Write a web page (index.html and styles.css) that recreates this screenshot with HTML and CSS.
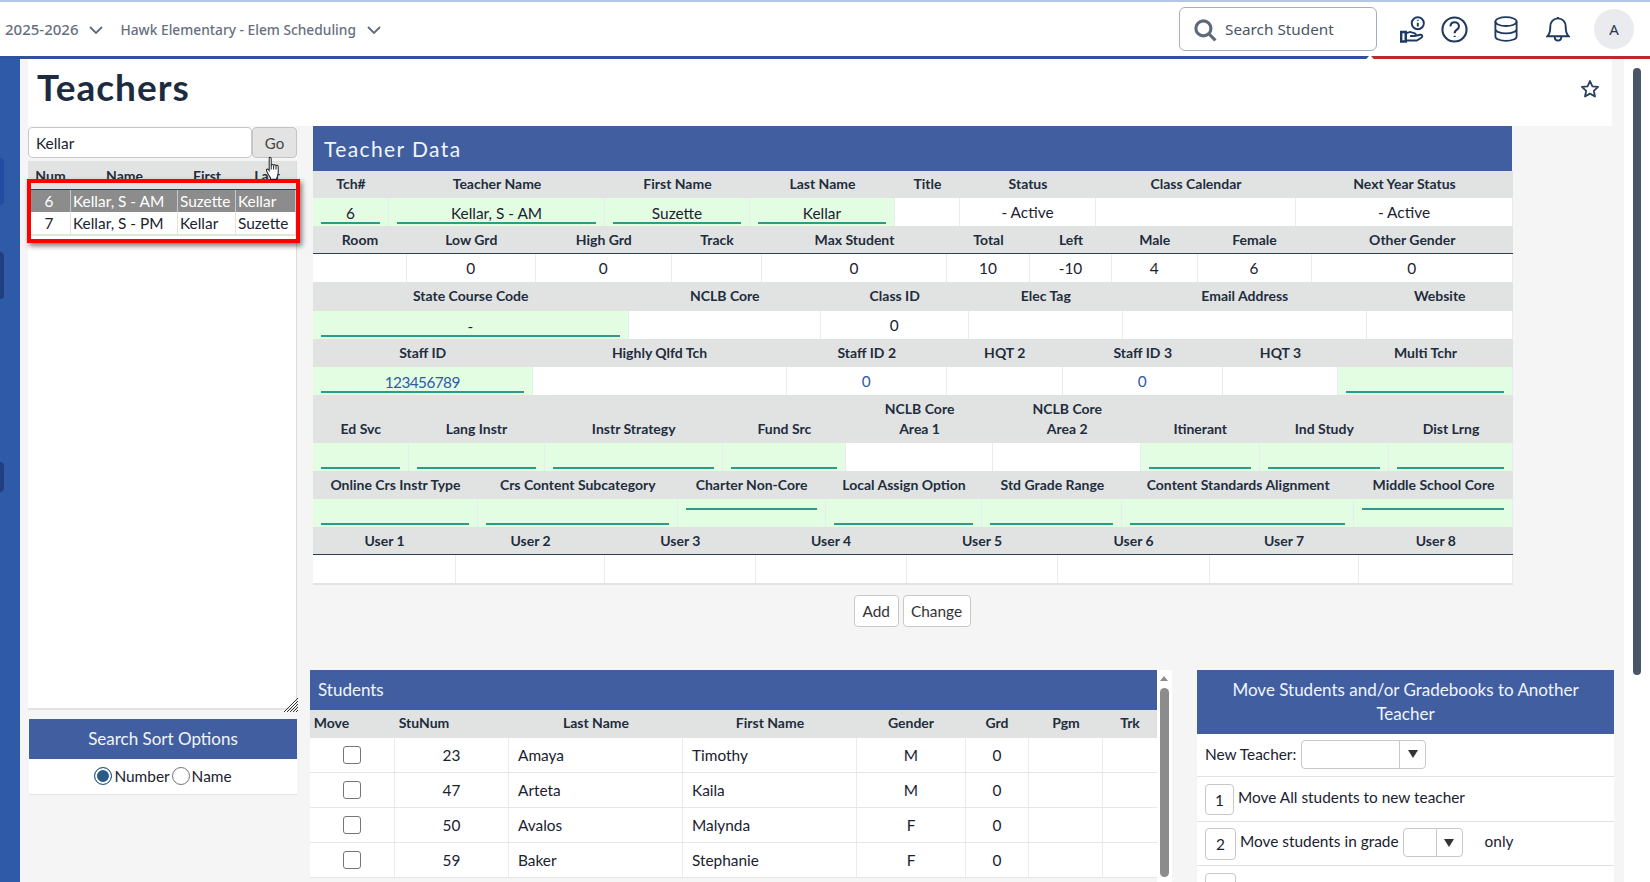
FILE: index.html
```html
<!DOCTYPE html>
<html lang="en">
<head>
<meta charset="utf-8">
<title>Teachers</title>
<link rel="stylesheet" href="styles.css">
</head>
<body>
<header class="top">
  <div class="ctx">
    <span class="year">2025-2026</span>
    <svg class="chev" viewBox="0 0 14 8"><path d="M1 1l6 6 6-6"/></svg>
    <span class="school">Hawk Elementary - Elem Scheduling</span>
    <svg class="chev" viewBox="0 0 14 8"><path d="M1 1l6 6 6-6"/></svg>
  </div>
  <div class="tools">
    <div class="search">
      <svg class="search-i" viewBox="0 0 22 22"><circle cx="9" cy="9" r="7.200"/><path d="M14.500 14.500l6 6"/></svg>
      <span>Search Student</span>
    </div>
    <svg class="ico hand" viewBox="0 0 26 28"><circle cx="18.500" cy="7.500" r="6.300"/><path d="M18.500 7v4M18.500 3.800v1.200"/><path class="sleeve" d="M1.200 16.500h4.800v10H1.200z"/><path d="M6 18l4.500-1.500 5 1.500c1.500.6 1 2.800-.5 2.800H10.500M15 20.800l6-1.300c2-.2 3 1.500 1.500 2.800L17.500 25.500H6"/></svg>
    <svg class="ico help" viewBox="0 0 28 28"><circle cx="14" cy="14" r="12.500"/><path d="M9.800 10.800c.3-6 8.800-5.500 8.800 0 0 3.400-4.500 3.400-4.500 7M14.100 20.600v1.200"/></svg>
    <svg class="ico db" viewBox="0 0 26 28"><ellipse cx="13" cy="6" rx="11.500" ry="4.800"/><path d="M1.500 6v16c0 2.600 5 4.800 11.500 4.800s11.500-2.200 11.500-4.800V6M1.500 14c0 2.600 5 4.800 11.500 4.800s11.500-2.200 11.500-4.800"/></svg>
    <svg class="ico bell" viewBox="0 0 24 27"><path d="M1 21c3-2.500 3-6 3-10 0-5 3.500-8.500 8-8.500s8 3.500 8 8.500c0 4 0 7.500 3 10zM12 1v1.500M8.500 21c0 6 7 6 7 0"/></svg>
    <div class="avatar">A</div>
  </div>
</header>
<div class="stripe"><i class="s-blue"></i><i class="s-red"></i></div>

<main class="main">
  <aside class="rail">
    <i class="tab tab1"></i><i class="tab tab2"></i><i class="tab tab3"></i>
  </aside>
  <div class="page">
    <div class="titlebar">
      <h1>Teachers</h1>
      <svg class="star" viewBox="0 0 20 20"><path d="M10 2l2.400 5.300 5.700.6-4.300 3.900 1.200 5.700L10 14.600l-5 2.900 1.200-5.700L1.900 7.900l5.700-.6z"/></svg>
    </div>
    <div class="work">
      <section class="left">
        <div class="finder">
          <div class="finder-input">Kellar</div>
          <div class="go">Go</div>
        </div>
        <div class="list">
          <div class="list-head"><span>Num</span><span>Name</span><span>First</span><span>Last</span></div>
          <div class="list-row sel"><span class="c">6</span><span>Kellar, S - AM</span><span>Suzette</span><span>Kellar</span></div>
          <div class="list-row"><span class="c">7</span><span>Kellar, S - PM</span><span>Kellar</span><span>Suzette</span></div>
          <div class="list-end"></div>
          <svg class="grip" viewBox="0 0 14 14"><path d="M0 14L14 0M3 14L14 3M6 14l8-8M9 14l5-5M12 14l2-2"/></svg>
        </div>
        <div class="redbox"></div>
        <svg class="cursor" viewBox="0 0 15 23" preserveAspectRatio="none"><path d="M4.200 1.500c1-.8 2-.2 2 1v6.500c.2-1.500 2.200-1.500 2.400 0 .2-1.300 2.200-1.300 2.400.2.300-1 2-.9 2.200.5v5.300c0 2.500-.8 3.600-1.500 5.500v1H5.500v-1.500c-1.500-2-3-4-4-6.500-.4-1.200.9-2 2-1l.7.900z"/><path d="M6.200 8.500v4M8.600 9v3.500M11 9.200v3.300"/></svg>
        <div class="sort">
          <div class="sort-head">Search Sort Options</div>
          <div class="sort-body">
            <span class="radio on"></span><span>Number</span><span class="radio"></span><span>Name</span>
          </div>
        </div>
      </section>

      <section class="right">
        <div class="teacher">
          <h2>Teacher Data</h2>

          <div class="row h27 r1">
            <div class="h">Tch#</div><div class="h">Teacher Name</div><div class="h">First Name</div><div class="h">Last Name</div><div class="h">Title</div><div class="h">Status</div><div class="h">Class Calendar</div><div class="h">Next Year Status</div>
          </div>
          <div class="row vals r1">
            <div class="g"><div class="u">6</div></div><div class="g"><div class="u">Kellar, S - AM</div></div><div class="g"><div class="u">Suzette</div></div><div class="g"><div class="u">Kellar</div></div><div class="v"></div><div class="v">- Active</div><div class="v"></div><div class="v">- Active</div>
          </div>

          <div class="row dark r2">
            <div class="h">Room</div><div class="h">Low Grd</div><div class="h">High Grd</div><div class="h">Track</div><div class="h">Max Student</div><div class="h">Total</div><div class="h">Left</div><div class="h">Male</div><div class="h">Female</div><div class="h">Other Gender</div>
          </div>
          <div class="row vals r2">
            <div class="v"></div><div class="v">0</div><div class="v">0</div><div class="v"></div><div class="v">0</div><div class="v">10</div><div class="v">-10</div><div class="v">4</div><div class="v">6</div><div class="v">0</div>
          </div>

          <div class="row h29 r3">
            <div class="h">State Course Code</div><div class="h">NCLB Core</div><div class="h">Class ID</div><div class="h">Elec Tag</div><div class="h">Email Address</div><div class="h">Website</div>
          </div>
          <div class="row vals r3">
            <div class="g"><div class="u">-</div></div><div class="v"></div><div class="v">0</div><div class="v"></div><div class="v"></div><div class="v"></div>
          </div>

          <div class="row r4">
            <div class="h">Staff ID</div><div class="h">Highly Qlfd Tch</div><div class="h">Staff ID 2</div><div class="h">HQT 2</div><div class="h">Staff ID 3</div><div class="h">HQT 3</div><div class="h">Multi Tchr</div>
          </div>
          <div class="row vals r4">
            <div class="g"><div class="u link">123456789</div></div><div class="v"></div><div class="v link">0</div><div class="v"></div><div class="v link">0</div><div class="v"></div><div class="g"><div class="u"></div></div>
          </div>

          <div class="row h48 r5">
            <div class="h">Ed Svc</div><div class="h">Lang Instr</div><div class="h">Instr Strategy</div><div class="h">Fund Src</div><div class="h">NCLB Core<br>Area 1</div><div class="h">NCLB Core<br>Area 2</div><div class="h">Itinerant</div><div class="h">Ind Study</div><div class="h">Dist Lrng</div>
          </div>
          <div class="row vals r5">
            <div class="g"><div class="u"></div></div><div class="g"><div class="u"></div></div><div class="g"><div class="u"></div></div><div class="g"><div class="u"></div></div><div class="v"></div><div class="v"></div><div class="g"><div class="u"></div></div><div class="g"><div class="u"></div></div><div class="g"><div class="u"></div></div>
          </div>

          <div class="row r6">
            <div class="h">Online Crs Instr Type</div><div class="h">Crs Content Subcategory</div><div class="h">Charter Non-Core</div><div class="h">Local Assign Option</div><div class="h">Std Grade Range</div><div class="h">Content Standards Alignment</div><div class="h">Middle School Core</div>
          </div>
          <div class="row vals r6">
            <div class="g"><div class="u"></div></div><div class="g"><div class="u"></div></div><div class="g"><div class="u short"></div></div><div class="g"><div class="u"></div></div><div class="g"><div class="u"></div></div><div class="g"><div class="u"></div></div><div class="g"><div class="u short"></div></div>
          </div>

          <div class="row dark r7">
            <div class="h">User 1</div><div class="h">User 2</div><div class="h">User 3</div><div class="h">User 4</div><div class="h">User 5</div><div class="h">User 6</div><div class="h">User 7</div><div class="h">User 8</div>
          </div>
          <div class="row vals end r7">
            <div class="v"></div><div class="v"></div><div class="v"></div><div class="v"></div><div class="v"></div><div class="v"></div><div class="v"></div><div class="v"></div>
          </div>
        </div>

        <div class="actions"><div class="btn">Add</div><div class="btn">Change</div></div>

        <div class="lower">
          <div class="students">
            <div class="stu-main">
              <div class="panel-head">Students</div>
              <div class="stu-head"><span>Move</span><span>StuNum</span><span>Last Name</span><span>First Name</span><span>Gender</span><span>Grd</span><span>Pgm</span><span>Trk</span></div>
              <div class="stu-row"><div><i class="check"></i></div><div class="c">23</div><div>Amaya</div><div>Timothy</div><div class="c">M</div><div class="c">0</div><div></div><div></div></div>
              <div class="stu-row"><div><i class="check"></i></div><div class="c">47</div><div>Arteta</div><div>Kaila</div><div class="c">M</div><div class="c">0</div><div></div><div></div></div>
              <div class="stu-row"><div><i class="check"></i></div><div class="c">50</div><div>Avalos</div><div>Malynda</div><div class="c">F</div><div class="c">0</div><div></div><div></div></div>
              <div class="stu-row"><div><i class="check"></i></div><div class="c">59</div><div>Baker</div><div>Stephanie</div><div class="c">F</div><div class="c">0</div><div></div><div></div></div>
            </div>
            <div class="stu-scroll"><i class="up"></i><i class="thumb"></i></div>
          </div>

          <div class="move">
            <div class="move-head">Move Students and/or Gradebooks to Another Teacher</div>
            <div class="move-new">New Teacher:<div class="combo wide"><i></i><b></b></div></div>
            <div class="move-row"><div class="num n29">1</div><span>Move All students to new teacher</span></div>
            <div class="move-row"><div class="num">2</div><span class="grade">Move students in grade</span><div class="combo small"><i></i><b></b></div><span class="only">only</span></div>
            <div class="move-row"><div class="num"></div></div>
          </div>
        </div>
      </section>
    </div>
  </div>
  <div class="pagescroll"><i></i></div>
</main>
</body>
</html>
```
FILE: styles.css
```css
* { box-sizing: border-box; }
html, body { margin: 0; height: 882px; overflow: hidden; }
body { font-family: Lato, "Noto Sans", sans-serif; font-size: 15.400px; color: #1a2230; background: #fff; }

.top { height: 56px; border-top: 2px solid #b4c6e4; display: flex; justify-content: space-between; align-items: center; background: #fff; }
.ctx { display: flex; align-items: center; padding-left: 5px; color: #667080; font-family: "Noto Sans", sans-serif; font-size: 13.750px; font-weight: 500; }
.year { font-size: 15px; }
.chev { width: 14px; height: 8px; margin: 2px 0 0 11px; fill: none; stroke: #5f6b7a; stroke-width: 1.800; }
.school { margin-left: 17px; }
.tools { display: flex; align-items: center; padding-right: 16px; }
.search { width: 198px; height: 44px; border: 1px solid #a3aec2; border-radius: 6px; display: flex; align-items: center; padding-left: 15px; margin-right: 23px; font-family: "Noto Sans", sans-serif; font-size: 15.300px; color: #4b5565; }
.search-i { width: 23px; height: 23px; margin: 2px 8px 0 -1px; fill: none; stroke: #5f6b7a; stroke-width: 3; }
.ico { fill: none; stroke: #1f3a5f; stroke-width: 2; display: block; }
.hand { width: 25px; height: 27px; margin-right: 16px; stroke-width: 2; }
.hand .sleeve { stroke-width: 2.600; }
.help { width: 27px; height: 27px; margin-right: 26px; stroke-width: 2.200; }
.db { width: 24px; height: 26px; margin-right: 28px; }
.bell { width: 24px; height: 26px; margin-right: 24px; }
.avatar { width: 40px; height: 40px; border-radius: 50%; background: #e9ebef; display: flex; align-items: center; justify-content: center; font-family: "Noto Sans", sans-serif; font-size: 15px; color: #2a3a52; }

.stripe { height: 3px; display: flex; justify-content: space-between; background: #fff; }
.s-blue { width: 1369px; background: #2f52a0; clip-path: polygon(0 0, 100% 0, 99.800% 100%, 0 100%); }
.s-red { width: 279px; background: #c0272d; clip-path: polygon(0 0, 100% 0, 100% 100%, 1% 100%); }

.main { display: flex; height: 823px; }
.rail { width: 20px; background: #2f5aa8; position: relative; flex: none; }
.tab { position: absolute; left: -4px; width: 8px; background: #1f3f80; border-radius: 4px; }
.tab1 { top: 99px; height: 47px; background: #214ea0; }
.tab2 { top: 193px; height: 47px; }
.tab3 { top: 403px; height: 30px; }
.page { width: 1604px; background: #f5f5f5; flex: none; }
.pagescroll { flex: 1; background: #fff; padding: 9px 0 0 9px; }
.pagescroll i { display: block; width: 8px; height: 607px; border-radius: 4px; background: #4a5568; }

.titlebar { margin-left: 8px; width: 1584px; height: 67px; background: #fff; display: flex; justify-content: space-between; align-items: flex-start; padding: 0 12px 0 9px; }
h1 { margin: 6px 0 0; font-size: 37px; line-height: 44px; font-weight: 700; letter-spacing: 1px; color: #1c2b40; }
.star { width: 20px; height: 20px; margin-top: 20px; fill: none; stroke: #2a3f5f; stroke-width: 1.800; stroke-linejoin: round; }

.work { display: flex; align-items: flex-start; padding-left: 8px; }
.left { width: 269px; position: relative; flex: none; padding-top: 1px; }
.finder { display: flex; height: 31px; background: #fff; }
.finder-input { width: 224px; border: 1px solid #c8c8c8; border-radius: 4px; padding: 0 7px; line-height: 31px; background: #fff; }
.go { width: 45px; border: 1px solid #c4c4c4; border-radius: 4px; background: #e3e3e3; text-align: center; line-height: 30px; font-size: 15px; color: #444; }
.list { margin-top: 3px; height: 549px; background: #fff; border-right: 1px solid #dcdcdc; position: relative; }
.list-head { height: 29px; background: #e1e3e3; display: grid; grid-template-columns: 45px 103px 62px 58px; border-bottom: 1px solid #2d3e55; font-weight: 700; font-size: 14px; color: #1f2d3d; text-align: center; line-height: 29px; }
.list-row { height: 22px; display: grid; grid-template-columns: 43px 107px 58px 60px; line-height: 23px; }
.list-row span { border-right: 1px solid #e3e3e3; padding-left: 2px; white-space: nowrap; overflow: hidden; }
.list-row .c { text-align: center; padding: 0; }
.list-row.sel { background: #8c8c8c; color: #fff; }
.list-row.sel span { border-color: #c8c8c8; }
.list-end { height: 2px; background: #e3e3e3; }
.grip { position: absolute; right: -2px; bottom: -2px; width: 14px; height: 14px; fill: none; stroke: #333; stroke-width: 1; z-index: 1; }
.list::after { content: ""; position: absolute; left: 0; right: 0; bottom: 0; height: 2px; background: #e2e4e4; }
.redbox { position: absolute; left: -1px; top: 53px; width: 273px; height: 64px; border: 4.500px solid #f00; box-shadow: 2px 3px 5px rgba(0, 0, 0, .5); }
.cursor { position: absolute; left: 237px; top: 30px; width: 15px; height: 25px; fill: #fff; stroke: #222; stroke-width: 1; }
.sort { margin: 9px 0 0 1px; width: 268px; }
.sort-head { height: 40px; background: #415fa0; color: #f2f5fb; text-align: center; line-height: 40px; font-size: 17px; }
.sort-body { height: 36px; background: #fff; border-bottom: 1px solid #e2e6e8; display: flex; align-items: center; justify-content: center; gap: 2px; padding-bottom: 1px; }
.radio { width: 18px; height: 18px; border: 1px solid #777; border-radius: 50%; background: #fff; }
.radio.on { border: 1.500px solid #2a5a8a; box-shadow: inset 0 0 0 2px #fff; background: #2a5a8a; }

.right { margin-left: 13px; flex: 1; }
.teacher { margin-left: 3px; width: 1200px; }
h2 { margin: 0; height: 45px; width: 1199px; background: #415fa0; color: #f2f5fb; font-size: 21px; font-weight: 400; letter-spacing: 1.400px; line-height: 45px; padding-left: 11px; }
.row { display: grid; height: 28px; }
.h27 { height: 27px; }
.h29 { height: 29px; }
.h48 { height: 48px; }
.dark { border-bottom: 1px solid #2d3e55; }
.h { background: #e1e3e3; font-weight: 700; font-size: 14px; line-height: 20px; color: #1f2d3d; text-align: center; white-space: nowrap; display: flex; align-items: center; justify-content: center; }
.h27 .h, .h29 .h { padding-bottom: 1px; }
.h48 .h { align-items: flex-end; padding-bottom: 4px; }
.vals > div { border-right: 1px solid #e8ecef; text-align: center; }
.v { background: #fff; line-height: 29px; }
.g { background: #e3fde3; padding: 0 8px; }
.u { height: 26px; border-bottom: 2px solid #2d9a8a; line-height: 30px; }
.u.short { height: 11px; }
.link { color: #2f5aa8; }
.u.link { letter-spacing: -.6px; }
.vals { background: #fff; }
.end { height: 30px; border-bottom: 2px solid #e2e4e4; }
.r1 { grid-template-columns: 76px 216px 145px 145px 65px 136px 200px 217px; }
.r2 { grid-template-columns: 94px 128.500px 136.500px 90px 185px 83px 82px 85.500px 114px 201.500px; }
.r3 { grid-template-columns: 315.500px 192.500px 147.500px 154.500px 243.500px 146.500px; }
.r4 { grid-template-columns: 219.500px 254px 160.500px 115.500px 160.500px 115px 175px; }
.r5 { grid-template-columns: 95.500px 136px 178.500px 122.700px 147.800px 147.500px 118.600px 129.400px 124px; }
.r6 { grid-template-columns: 165px 199.500px 148.200px 156.700px 140px 231.600px 159px; }
.r7 { grid-template-columns: 143px 149px 150.500px 151px 151px 152px 149px 154.600px; }

.actions { display: flex; gap: 4px; margin: 10px 0 0 544px; height: 32px; }
.btn { background: #fff; border: 1px solid #c8c8c8; border-radius: 4px; padding: 0 7.500px; line-height: 30px; color: #333; }

.lower { display: flex; margin-top: 43px; align-items: flex-start; }
.students { width: 862px; display: flex; flex: none; }
.stu-main { width: 847px; }
.panel-head { height: 40px; background: #415fa0; color: #f2f5fb; line-height: 40px; padding-left: 8px; font-size: 17px; }
.stu-head { height: 27.500px; background: #e1e3e3; display: grid; grid-template-columns: 43px 142px 202px 146px 136px 36px 102px 26px; font-weight: 700; font-size: 14px; color: #1f2d3d; line-height: 26px; text-align: center; white-space: nowrap; }
.stu-row { height: 35px; display: grid; grid-template-columns: 85px 114px 174px 174px 109px 63px 74px 54px; background: #fff; border-bottom: 1.500px solid #e3e8ea; line-height: 34px; }
.stu-row > div { border-right: 1.500px solid #e8ecef; padding-left: 9px; }
.stu-row > .c { text-align: center; padding: 0; }
.stu-row > div:last-child { border-right: 0; }
.stu-row > div:first-child { padding: 8.500px 0 0 33px; }
.check { display: block; width: 18px; height: 18px; border: 1px solid #767676; border-radius: 3px; background: #fff; }
.stu-scroll { width: 15px; height: 212px; background: #fff; padding: 6px 0 0 3px; }
.up { display: block; width: 0; margin-left: 0; border: 4.500px solid transparent; border-top: 0; border-bottom: 5px solid #8c8c8c; }
.thumb { display: block; width: 9px; height: 189px; margin-top: 7px; border-radius: 4.500px; background: #8c8c8c; }

.move { margin-left: 25px; width: 417px; background: #fff; flex: none; }
.move-head { height: 64px; background: #415fa0; color: #f2f5fb; font-size: 17px; line-height: 24px; padding: 8px 30px 0; text-align: center; }
.move-new { height: 43px; display: flex; align-items: center; padding-left: 8px; gap: 5px; border-bottom: 1px solid #e2e2e2; padding-bottom: 2px; }
.combo { height: 29px; border: 1px solid #c8c8c8; border-radius: 4px; display: flex; background: #fff; }
.combo i { flex: 1; border-right: 1px solid #c8c8c8; }
.combo b { flex: none; width: 25px; display: flex; align-items: center; justify-content: center; }
.combo b::after { content: ""; border: 5px solid transparent; border-top: 8px solid #333; border-bottom: 0; }
.wide { width: 125px; }
.small { width: 60px; margin-left: 4px; }
.move-row { height: 44.500px; display: flex; align-items: flex-start; padding: 6.500px 0 0 8px; border-bottom: 1px solid #e2e2e2; line-height: 27px; }
.num { width: 31px; height: 32px; border: 1px solid #c8c8c8; border-radius: 4px; text-align: center; line-height: 31px; flex: none; margin-right: 4px; }
.num.n29 { width: 29px; height: 31px; }
.only { margin-left: 22px; }
```
